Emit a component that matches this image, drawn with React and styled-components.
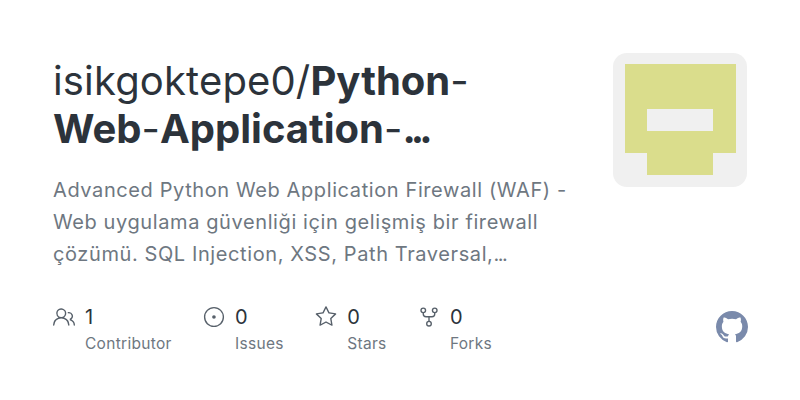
import React from 'react';
import styled, { createGlobalStyle } from 'styled-components';
import { GoPeople, GoIssueOpened, GoStar, GoRepoForked } from 'react-icons/go';

const Global = createGlobalStyle`
  html, body { margin: 0; padding: 0; background: #fff; }
  body { font-family: Inter, "Noto Sans", sans-serif; }
`;

const Card = styled.div`
  width: 800px;
  height: 400px;
  box-sizing: border-box;
  padding: 53px 53px 0;
  display: flex;
  flex-direction: column;
  overflow: hidden;
`;

const Top = styled.div`
  display: flex;
  justify-content: space-between;
  align-items: flex-start;
  height: 229px;
`;

const Copy = styled.div`
  width: 530px;
`;

const Title = styled.h1`
  margin: 4px 0 0;
  font-size: 40px;
  line-height: 48px;
  font-weight: 400;
  letter-spacing: 0.15px;
  color: #2c333b;
  b { font-weight: 700; letter-spacing: 0; }
`;

const Dash = styled.span`
  font-weight: 400;
`;

const Dots = styled.span`
  letter-spacing: ${p => p.$tight}px;
`;

const Desc = styled.p`
  margin: 21px 0 0;
  font-size: 20px;
  line-height: 32px;
  letter-spacing: 0.6px;
  color: #6e7781;
`;

const Avatar = styled.svg`
  width: 134px;
  height: 134px;
  flex: none;
  display: block;
`;

const Bottom = styled.div`
  display: flex;
  justify-content: space-between;
  align-items: flex-start;
  padding-top: 21px;
`;

const Stats = styled.div`
  display: flex;
  gap: 31.4px;
`;

const Stat = styled.div`
  display: grid;
  grid-template-columns: 20px auto;
  column-gap: 12px;
  align-items: center;
  color: #57606a;
  svg { width: 22px; height: 22px; }
`;

const Num = styled.span`
  font-size: 20px;
  line-height: 28px;
  color: #2c333b;
`;

const Label = styled.span`
  grid-column: 2;
  font-size: 15.5px;
  line-height: 26px;
  letter-spacing: 0.3px;
  color: #6e7781;
`;

const Mark = styled.svg`
  display: block;
  width: 32px;
  height: 32px;
  margin: 8px -1px 0 0;
  fill: #7a8aab;
`;

const stats = [
  { Icon: GoPeople, n: 1, label: 'Contributor' },
  { Icon: GoIssueOpened, n: 0, label: 'Issues' },
  { Icon: GoStar, n: 0, label: 'Stars' },
  { Icon: GoRepoForked, n: 0, label: 'Forks' },
];

export default function App() {
  return (
    <Card>
      <Global />
      <Top>
        <Copy>
          <Title>
            isikgoktepe0/<b>Python<Dash>-</Dash><br />Web<Dash>-</Dash>Application<Dash>-</Dash><Dots $tight={-5}>...</Dots></b>
          </Title>
          <Desc>
            Advanced Python Web Application Firewall (WAF) -<br />
            Web uygulama güvenliği için gelişmiş bir firewall<br />
            çözümü. SQL Injection, XSS, Path Traversal,<Dots $tight={-1.5}>...</Dots>
          </Desc>
        </Copy>
        <Avatar viewBox="0 0 134 134">
          <rect width="134" height="134" rx="14" fill="#f0f0f0" />
          <path fill="#dadd8c" fillRule="evenodd" d="M12 11H123V100H100V122H34V100H12ZM34 56V78H100V56Z" />
        </Avatar>
      </Top>
      <Bottom>
        <Stats>
          {stats.map(({ Icon, n, label }) => (
            <Stat key={label}>
              <Icon />
              <Num>{n}</Num>
              <Label>{label}</Label>
            </Stat>
          ))}
        </Stats>
        <Mark viewBox="0 0 16 16">
          <path d="M8 0c4.42 0 8 3.58 8 8a8.013 8.013 0 0 1-5.45 7.59c-.4.08-.55-.17-.55-.38 0-.27.01-1.13.01-2.2 0-.75-.25-1.23-.54-1.48 1.78-.2 3.65-.88 3.65-3.95 0-.88-.31-1.59-.82-2.15.08-.2.36-1.02-.08-2.12 0 0-.67-.22-2.2.82-.64-.18-1.32-.27-2-.27-.68 0-1.36.09-2 .27-1.53-1.03-2.2-.82-2.2-.82-.44 1.1-.16 1.92-.08 2.12-.51.56-.82 1.28-.82 2.15 0 3.06 1.86 3.75 3.64 3.95-.23.2-.44.55-.51 1.07-.46.21-1.61.55-2.33-.66-.15-.24-.6-.83-1.23-.82-.67.01-.27.38.01.53.34.19.73.9.82 1.13.16.45.68 1.31 2.69.94 0 .67.01 1.3.01 1.49 0 .21-.15.45-.55.38A7.995 7.995 0 0 1 0 8c0-4.42 3.58-8 8-8Z" />
        </Mark>
      </Bottom>
    </Card>
  );
}
